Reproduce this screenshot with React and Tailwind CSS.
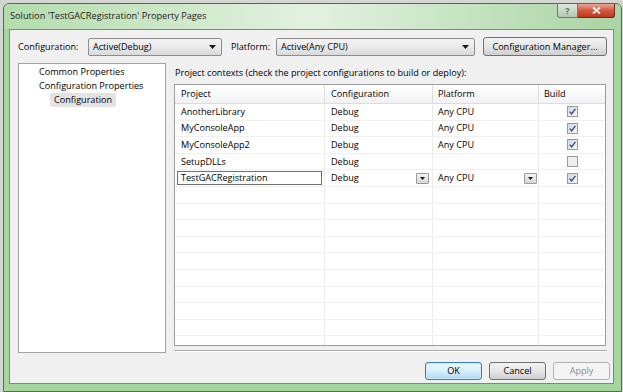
import React from "react";

const rows = [
  { name: "AnotherLibrary", config: "Debug", platform: "Any CPU", build: true },
  { name: "MyConsoleApp", config: "Debug", platform: "Any CPU", build: true },
  { name: "MyConsoleApp2", config: "Debug", platform: "Any CPU", build: true },
  { name: "SetupDLLs", config: "Debug", platform: "", build: false },
];

const Arrow = () => (
  <svg width="7" height="4" viewBox="0 0 7 4">
    <path d="M0 0 L7 0 L3.5 4 Z" fill="#1a1a1a" />
  </svg>
);

const Combo = ({ label, className }) => (
  <div
    className={`h-[18px] flex items-center justify-between pl-[4px] pr-[5px] border border-[#8d8d8d] rounded-[2px] bg-gradient-to-b from-[#f3f3f3] via-[#ebebeb] to-[#d9d9d9] ${className}`}
  >
    <span>{label}</span>
    <Arrow />
  </div>
);

const CheckBox = ({ checked }) => (
  <svg width="11" height="11" viewBox="0 0 11 11">
    <defs>
      <linearGradient id="cbg" x1="0" y1="0" x2="1" y2="1">
        <stop offset="0" stopColor="#cfd6e0" />
        <stop offset="1" stopColor="#f6f7f9" />
      </linearGradient>
    </defs>
    <rect x="0.5" y="0.5" width="10" height="10" fill={checked ? "url(#cbg)" : "#eeeeee"} stroke="#9a9a9a" />
    {checked && (
      <path d="M2.6 5.6 L4.6 7.8 L8.4 2.8" fill="none" stroke="#3b4f80" strokeWidth="1.4" />
    )}
  </svg>
);

const CellButton = () => (
  <div className="w-[13px] h-[11px] flex items-center justify-center border border-[#9a9a9a] rounded-[1px] bg-gradient-to-b from-[#f4f4f4] to-[#d6d6d6]">
    <svg width="5" height="3" viewBox="0 0 5 3">
      <path d="M0 0 L5 0 L2.5 3 Z" fill="#1a1a1a" />
    </svg>
  </div>
);

const Button = ({ children, kind }) => {
  const styles = {
    ok: "border-[#3c7fb1] bg-gradient-to-b from-[#eaf6fd] via-[#d9f0fc] to-[#a7d9f5] text-black shadow-[inset_0_0_0_1px_#cdeafb]",
    normal: "border-[#707070] bg-gradient-to-b from-[#f2f2f2] via-[#e6e6e6] to-[#cfcfcf] text-black",
    disabled: "border-[#adb2b5] bg-[#f4f4f4] text-[#8a8a8a]",
  };
  return (
    <div
      className={`w-[57px] h-[18px] flex items-center justify-center border rounded-[3px] ${styles[kind]}`}
    >
      {children}
    </div>
  );
};

const App = () => {
  return (
    <div className="w-[623px] h-[392px] overflow-hidden bg-[#d3d6d3] pt-[3px] pl-[3px] pr-[1px] font-['Open_Sans',sans-serif] text-[9.1px] leading-[14px] text-black">
      <div className="h-[389px] flex flex-col rounded-t-[6px] border border-[#4f6d4f] bg-[#a4d69e]">
        {/* title bar */}
        <div className="h-[25px] shrink-0 flex items-start justify-between pl-[6px] pr-[6px] rounded-t-[5px] bg-gradient-to-r from-[#b3dcad] via-[#e2f2df] to-[#a9d4a4]">
          <span className="mt-[5px] text-[9.2px] text-[#1b1b1b]">
            Solution 'TestGACRegistration' Property Pages
          </span>
          <div className="flex">
            <div className="w-[21px] h-[14px] flex items-center justify-center rounded-bl-[3px] border border-t-0 border-[#6c7f6c] bg-gradient-to-b from-[#dfe9de] to-[#b5c6b4] text-[9px] font-bold text-[#5d6e5d]">
              ?
            </div>
            <div className="w-[37px] h-[14px] flex items-center justify-center rounded-br-[3px] border border-t-0 border-l-0 border-[#6b2a22] bg-gradient-to-b from-[#e8a597] via-[#d2573f] to-[#c2351d]">
              <svg width="9" height="7" viewBox="0 0 9 7">
                <path d="M1 0.5 L8 6.5 M8 0.5 L1 6.5" stroke="white" strokeWidth="1.8" />
              </svg>
            </div>
          </div>
        </div>

        {/* client area */}
        <div className="flex-1 ml-[5px] mr-[7px] mb-[7px] border border-[#6f946b] bg-[#f0f0f0] flex flex-col pl-[8px]">
          <div className="mt-[7px] flex items-center">
            <span className="w-[70px]">Configuration:</span>
            <Combo label="Active(Debug)" className="w-[134px]" />
            <span className="ml-[9px] w-[45px]">Platform:</span>
            <Combo label="Active(Any CPU)" className="w-[199px]" />
            <div className="ml-[8px] w-[124px] h-[19px] flex items-center justify-center border border-[#707070] rounded-[3px] bg-gradient-to-b from-[#f2f2f2] via-[#e6e6e6] to-[#cfcfcf]">
              Configuration Manager...
            </div>
          </div>

          <div className="mt-[7px] h-[290px] flex">
            {/* tree */}
            <div className="w-[148px] h-full border border-[#a3a3a3] bg-white pt-[1px] pl-[20px]">
              <div>Common Properties</div>
              <div>Configuration Properties</div>
              <div className="ml-[11px] w-fit px-[4px] rounded-[2px] bg-[#e3e3e3]">Configuration</div>
            </div>

            {/* right panel */}
            <div className="ml-[8px] w-[433px] flex flex-col">
              <div className="mt-[3px] mb-[4px] pl-[1px]">
                Project contexts (check the project configurations to build or deploy):
              </div>
              <div className="w-[432px] h-[262px] border border-[#9c9c9c] bg-white overflow-hidden">
                <div className="h-[19px] grid grid-cols-[150px_108px_106px_1fr] border-b border-[#dcdcdc] bg-gradient-to-b from-white to-[#f1f2f4]">
                  <div className="pl-[6px] flex items-center border-r border-[#dedede]">Project</div>
                  <div className="pl-[6px] flex items-center border-r border-[#dedede]">Configuration</div>
                  <div className="pl-[5px] flex items-center border-r border-[#dedede]">Platform</div>
                  <div className="pl-[5px] flex items-center">Build</div>
                </div>
                {rows.map((r) => (
                  <div key={r.name} className="h-[16.6px] grid grid-cols-[150px_108px_106px_1fr] border-b border-[#f0f0f0]">
                    <div className="pl-[6px] flex items-center border-r border-[#ececec]">{r.name}</div>
                    <div className="pl-[6px] flex items-center border-r border-[#ececec]">{r.config}</div>
                    <div className="pl-[5px] flex items-center border-r border-[#ececec]">{r.platform}</div>
                    <div className="flex items-center justify-center">
                      <CheckBox checked={r.build} />
                    </div>
                  </div>
                ))}
                <div className="h-[16.6px] grid grid-cols-[150px_108px_106px_1fr] border-b border-[#f0f0f0]">
                  <div className="flex items-center pl-[2px] pr-[2px] border-r border-[#ececec]">
                    <div className="w-full h-[14px] pl-[3px] flex items-center border border-[#6e6e6e]">TestGACRegistration</div>
                  </div>
                  <div className="pl-[6px] pr-[3px] flex items-center justify-between border-r border-[#ececec]">
                    <span>Debug</span>
                    <CellButton />
                  </div>
                  <div className="pl-[5px] pr-[1px] flex items-center justify-between border-r border-[#ececec]">
                    <span>Any CPU</span>
                    <CellButton />
                  </div>
                  <div className="flex items-center justify-center">
                    <CheckBox checked />
                  </div>
                </div>
                {Array.from({ length: 10 }).map((_, i) => (
                  <div key={i} className="h-[16.6px] grid grid-cols-[150px_108px_106px_1fr] border-b border-[#f0f0f0]">
                    <div className="border-r border-[#ececec]" />
                    <div className="border-r border-[#ececec]" />
                    <div className="border-r border-[#ececec]" />
                    <div />
                  </div>
                ))}
              </div>
              <div className="mt-[4px] h-[2px] border-t border-[#a9a9a9] border-b border-b-white" />
            </div>
          </div>

          <div className="mt-[9px] flex justify-end gap-[7px] pr-[3px]">
            <Button kind="ok">OK</Button>
            <Button kind="normal">Cancel</Button>
            <Button kind="disabled">Apply</Button>
          </div>
        </div>
      </div>
    </div>
  );
};

export default App;
